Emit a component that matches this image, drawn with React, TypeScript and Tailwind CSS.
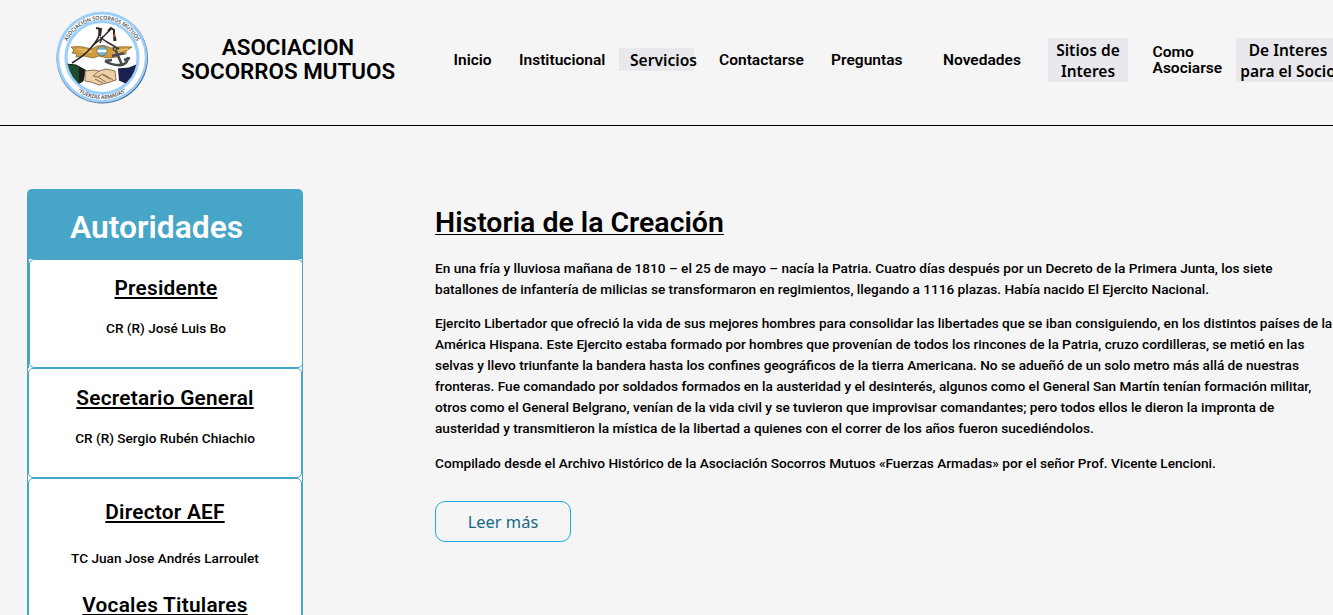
import React from 'react';

function Logo() {
  return (
    <svg className="h-[94px] w-[94px] shrink-0" viewBox="0 0 94 94" aria-label="Asociación Socorros Mutuos">
      <defs>
        <path id="topArc" d="M8.600 47a38.400 38.400 0 0 1 76.800 0" />
        <path id="bottomArc" d="M5.400 46.500a41.600 41.600 0 0 0 83.200 0" />
        <clipPath id="inner"><circle cx="47" cy="46.500" r="35" /></clipPath>
      </defs>
      <circle cx="47.200" cy="46.900" r="45.700" fill="#48678c" />
      <circle cx="46.800" cy="46.200" r="45.400" fill="#9ccffa" />
      <circle cx="47" cy="46.300" r="42.800" fill="#fff" />
      <circle cx="47" cy="46.500" r="36" fill="#fff" stroke="#9ccffa" strokeWidth="3.200" />
      <g clipPath="url(#inner)">
        <path d="M10 53l11 1 9 5-2 11-5 3H14z" fill="#1d4b2e" stroke="#171c17" />
        <path d="M24 56l7 3-3 11-4 1z" fill="#171e1a" />
        <path d="M84 53l-10 4-11 1 1 11 9 4h11z" fill="#1b2150" stroke="#11152f" />
        <path d="M63 58l-3 1 1 10 3 1z" fill="#fff" />
        <path d="M30 60l9-1 5 1 7-2 9 2 1 9-9 3-8 2-8-3-6-1z" fill="#ecd0a8" stroke="#765236" strokeWidth=".8" />
        <path d="M44 60l-6 5 4 1 6-3 10 6m-18-1l8 4m-5-6l8 5m-3-7l7 4" fill="none" stroke="#765236" strokeWidth=".8" />
      </g>
      <path d="M16 36q8-1 12 0l9 2 5-3q5-1 9 0l5 2q9-2 21-1l-6 4v3l-7 1-2 2-10 1-8-2-6 2-9-2-8 1 1-3-5-1 2-3z" fill="#cf9d40" stroke="#7d5a20" strokeWidth=".7" />
      <path d="M22 38l15 2m-11 1l11 0m20-1l16-2m-14 4l9-1" stroke="#f0ca72" strokeWidth="1.100" />
      <circle cx="47" cy="40" r="5" fill="#69b4da" stroke="#846326" strokeWidth=".8" />
      <path d="M42.500 40h9" stroke="#fff" strokeWidth="2.500" />
      <path d="M44 18q1 6-2 11t-9 11-16 12" fill="none" stroke="#2c2424" strokeWidth="1.700" />
      <path d="M56 18l-9 9-10 8m8-9l7 5 12 7m-16-13l-3 7" fill="none" stroke="#332a28" strokeWidth="1.500" />
      <path d="M41 17l5 1-1 7m8-5l3-3 3 2v5" fill="none" stroke="#33231f" strokeWidth="2" />
      <path d="M59 23l.5 3" stroke="#a6442c" strokeWidth="2.400" />
      <path d="M59.500 26l.5 4" stroke="#33231f" strokeWidth="3" />
      <g fill="none" stroke="#4a4b50" strokeWidth="2.600">
        <circle cx="60" cy="38" r="1.800" strokeWidth="1.400" />
        <path d="M61 40l6 14m-10-9l12-3M50 50q8 5 17 4 6-2 6-8m-23 4l7-1m12 0l6-2" />
      </g>
      <g fill="#3a4048" fontFamily="Open Sans" fontWeight="600">
        <text fontSize="5.400" textAnchor="middle" textLength="86" lengthAdjust="spacingAndGlyphs"><textPath href="#topArc" startOffset="50%">ASOCIACIÓN SOCORROS MUTUOS</textPath></text>
        <text fontSize="5.200" textAnchor="middle" textLength="52"><textPath href="#bottomArc" startOffset="50%">"FUERZAS ARMADAS"</textPath></text>
      </g>
    </svg>
  );
}

function Heading({ children }: { children: string }) {
  return (
    <h3 className="text-[20.800px] leading-[20px] font-semibold tracking-[0.24px] underline decoration-[1.500px] underline-offset-[2px]">{children}</h3>
  );
}

function Authority({ title, name, className }: { title: string; name: string; className: string }) {
  return (
    <section className={`rounded-[5px] border border-[#47a6c7] bg-white text-center ${className}`}>
      <Heading>{title}</Heading>
      <p className="mt-[20px] text-[13.600px] leading-[21px] font-medium">{name}</p>
    </section>
  );
}

const paragraphs = [
  [
    'En una fría y lluviosa mañana de 1810 – el 25 de mayo – nacía la Patria. Cuatro días después por un Decreto de la Primera Junta, los siete',
    'batallones de infantería de milicias se transformaron en regimientos, llegando a 1116 plazas. Había nacido El Ejercito Nacional.',
  ],
  [
    'Ejercito Libertador que ofreció la vida de sus mejores hombres para consolidar las libertades que se iban consiguiendo, en los distintos países de la',
    'América Hispana. Este Ejercito estaba formado por hombres que provenían de todos los rincones de la Patria, cruzo cordilleras, se metió en las',
    'selvas y llevo triunfante la bandera hasta los confines geográficos de la tierra Americana. No se adueñó de un solo metro más allá de nuestras',
    'fronteras. Fue comandado por soldados formados en la austeridad y el desinterés, algunos como el General San Martín tenían formación militar,',
    'otros como el General Belgrano, venían de la vida civil y se tuvieron que improvisar comandantes; pero todos ellos le dieron la impronta de',
    'austeridad y transmitieron la mística de la libertad a quienes con el correr de los años fueron sucediéndolos.',
  ],
  ['Compilado desde el Archivo Histórico de la Asociación Socorros Mutuos «Fuerzas Armadas» por el señor Prof. Vicente Lencioni.'],
];

export default function App() {
  return (
    <div className="h-[615px] w-full overflow-hidden bg-[#f5f5f5] font-['Roboto',sans-serif] text-black">
      <header className="flex h-[126px] items-start overflow-hidden border-b border-black pl-[55px]">
        <div className="pt-[11px]"><Logo /></div>
        <h1 className="mt-[35px] ml-[22px] w-[234px] shrink-0 text-center text-[22.400px] leading-[24px] font-semibold">ASOCIACION<br />SOCORROS MUTUOS</h1>
        <nav className="flex shrink-0 items-start pt-[38px] text-[15.550px] font-semibold whitespace-nowrap">
          <a className="ml-[48.500px] w-[65.500px] pt-[11px] leading-[22px]">Inicio</a>
          <a className="w-[100px] pt-[11px] leading-[22px]">Institucional</a>
          <a className="mt-[10px] w-[75px] bg-[#e8e8ed] pt-px pl-[11px] font-['Noto_Sans',sans-serif] text-[15.600px] leading-[22px]">Servicios</a>
          <a className="ml-[25px] w-[112px] pt-[11px] leading-[22px]">Contactarse</a>
          <a className="w-[112px] pt-[11px] leading-[22px]">Preguntas</a>
          <a className="w-[105px] pt-[11px] leading-[22px]">Novedades</a>
          <a className="h-[44px] w-[80px] bg-[#e8e8ed] pt-[2px] text-center font-['Noto_Sans',sans-serif] text-[15.500px] leading-[21px]">Sitios de<br />Interes</a>
          <a className="ml-[24.500px] w-[83.500px] pt-[6px] leading-[16px]">Como<br />Asociarse</a>
          <a className="flex h-[44px] w-[104px] justify-center bg-[#e8e8ed] pt-[2px] text-center font-['Noto_Sans',sans-serif] text-[15.500px] leading-[21px]">De Interes<br />para el Socio</a>
        </nav>
      </header>
      <main className="flex items-start pt-[63px] pl-[27px]">
        <aside className="w-[276px] shrink-0">
          <h2 className="h-[70px] rounded-t-[5px] bg-[#47a6c7] pt-[19px] pl-[43px] text-[31.800px] leading-[38px] font-semibold text-white">Autoridades</h2>
          <div className="border-x border-[#47a6c7] bg-white">
            <div className="-mr-px border-l border-[#47a6c7]">
              <Authority title="Presidente" name="CR (R) José Luis Bo" className="h-[109px] pt-[18px]" />
            </div>
            <Authority title="Secretario General" name="CR (R) Sergio Rubén Chiachio" className="h-[110px] pt-[19px]" />
            <section className="h-[180px] rounded-t-[5px] border border-[#47a6c7] bg-white pt-[23px] text-center">
              <Heading>Director AEF</Heading>
              <p className="mt-[26px] mb-[26px] text-[13.600px] leading-[21px] font-medium">TC Juan Jose Andrés Larroulet</p>
              <Heading>Vocales Titulares</Heading>
            </section>
          </div>
        </aside>
        <article className="ml-[132px] shrink-0 pt-[20px] whitespace-nowrap">
          <h2 className="text-[28.450px] leading-[28px] font-semibold underline decoration-1 underline-offset-[2px]">Historia de la Creación</h2>
          <div className="mt-[21px] flex flex-col text-[13.630px] leading-[21px] font-medium">
            {paragraphs.map((lines, i) => (
              <p key={i} className="not-first:mt-[13px] last:mt-[14px]">{lines.map((line) => <span key={line} className="block">{line}</span>)}</p>
            ))}
          </div>
          <button className="mt-[27px] h-[41px] w-[136px] rounded-[10px] border border-[#16afe0] pt-[2px] font-['Noto_Sans',sans-serif] text-[16.400px] font-normal text-[#176985]">Leer más</button>
        </article>
      </main>
    </div>
  );
}
